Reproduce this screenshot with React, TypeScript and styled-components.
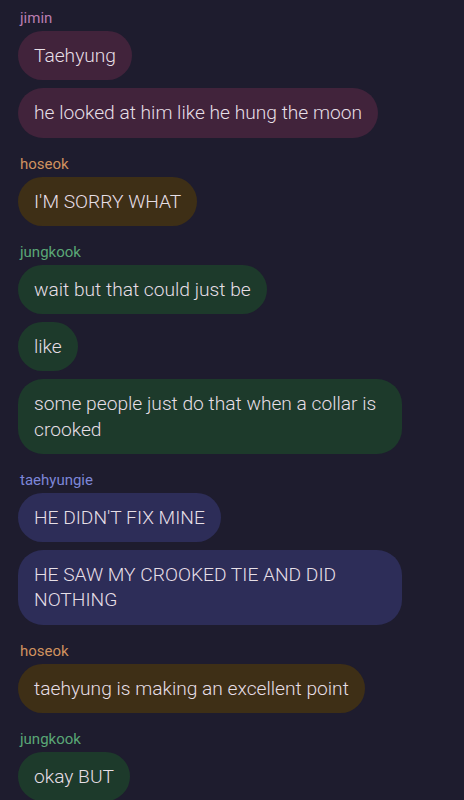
import React from "react";
import styled, { createGlobalStyle } from "styled-components";

const Global = createGlobalStyle`
  html, body { margin: 0; padding: 0; background: #1e1c2e; }
  body { font-family: Roboto, "Noto Sans", sans-serif; }
`;

type Tone = "jimin" | "hoseok" | "jungkook" | "tae";

const palette: Record<Tone, { name: string; bubble: string }> = {
  jimin: { name: "#b97eb2", bubble: "#41233b" },
  hoseok: { name: "#d0925f", bubble: "#3e2f16" },
  jungkook: { name: "#5aa776", bubble: "#1d3a2b" },
  tae: { name: "#7d86d8", bubble: "#2d2d58" },
};

const Feed = styled.div`
  display: flex;
  flex-direction: column;
  gap: 16px;
  padding: 8px 0 0 18px;
  width: 464px;
  height: 800px;
  box-sizing: border-box;
  overflow: hidden;
`;

const Group = styled.section`
  display: flex;
  flex-direction: column;
  align-items: flex-start;
  gap: 8px;
`;

const Name = styled.div<{ $tone: Tone }>`
  color: ${(p) => palette[p.$tone].name};
  font-size: 15px;
  line-height: 20px;
  padding-left: 2px;
  margin-bottom: -5px;
`;

const Bubble = styled.div<{ $tone: Tone }>`
  background: ${(p) => palette[p.$tone].bubble};
  color: #e6dfe6;
  font-size: 19.2px;
  font-weight: 300;
  line-height: 25.25px;
  padding: 12px 16px;
  border-radius: 25px;
  max-width: 384px;
  box-sizing: border-box;
`;

const chat: { who: string; tone: Tone; msgs: string[] }[] = [
  { who: "jimin", tone: "jimin", msgs: ["Taehyung", "he looked at him like he hung the moon"] },
  { who: "hoseok", tone: "hoseok", msgs: ["I'M SORRY WHAT"] },
  {
    who: "jungkook",
    tone: "jungkook",
    msgs: ["wait but that could just be", "like", "some people just do that when a collar is crooked"],
  },
  { who: "taehyungie", tone: "tae", msgs: ["HE DIDN'T FIX MINE", "HE SAW MY CROOKED TIE AND DID NOTHING"] },
  { who: "hoseok", tone: "hoseok", msgs: ["taehyung is making an excellent point"] },
  { who: "jungkook", tone: "jungkook", msgs: ["okay BUT"] },
];

export default function App() {
  return (
    <>
      <Global />
      <Feed>
        {chat.map((g, i) => (
          <Group key={i}>
            <Name $tone={g.tone}>{g.who}</Name>
            {g.msgs.map((m, j) => (
              <Bubble key={j} $tone={g.tone}>
                {m}
              </Bubble>
            ))}
          </Group>
        ))}
      </Feed>
    </>
  );
}
